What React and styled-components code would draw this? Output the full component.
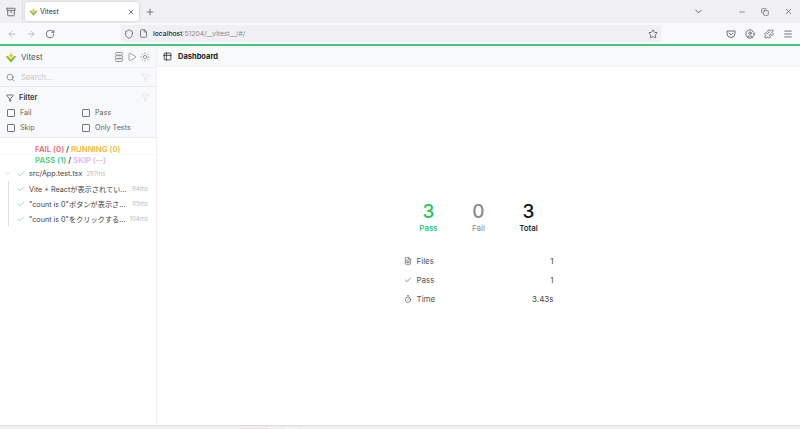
import React from "react";
import styled, { createGlobalStyle } from "styled-components";
import {
  ArrowLeft,
  ArrowRight,
  RotateCw,
  Shield,
  File,
  FileText,
  Star,
  ChevronDown,
  Minus,
  Copy,
  X,
  Plus,
  CircleUser,
  Puzzle,
  Menu,
  Search,
  Filter,
  FilterX,
  Play,
  Sun,
  Check,
  Timer,
  Table2,
  Archive
} from "lucide-react";

const GlobalStyle = createGlobalStyle`
  html, body { margin: 0; height: 100%; }
  body { font-family: Inter, "Noto Sans CJK JP", sans-serif; background: #fff; overflow: hidden; }
  #root { height: 100%; }
`;

const Page = styled.div`
  width: 800px;
  height: 429px;
  display: flex;
  flex-direction: column;
  overflow: hidden;
`;

const TabStrip = styled.div`
  height: 23px;
  background: #f0f0f4;
  display: flex;
  align-items: center;
  color: #5b5b66;
  flex: none;
`;

const TabGroupButton = styled.div`
  width: 23px;
  height: 23px;
  display: flex;
  align-items: center;
  justify-content: center;
  border-right: 1px solid #e0e0e6;
  box-sizing: border-box;
`;

const Tab = styled.div`
  width: 114px;
  height: 19px;
  margin-left: 2px;
  background: #fff;
  border-radius: 3px;
  box-shadow: 0 0 3px rgba(0, 0, 0, 0.2);
  display: flex;
  align-items: center;
  padding: 0 4px;
  box-sizing: border-box;
  font-size: 7px;
  color: #333;
  gap: 2px;
`;

const TabTitle = styled.span`
  flex: 1;
`;

const NewTab = styled.div`
  margin-left: 6px;
  display: flex;
`;

const StripRight = styled.div`
  margin-left: auto;
  display: flex;
  align-items: center;
  padding-right: 7px;
`;

const ListAll = styled.div`
  display: flex;
  margin-right: 34px;
`;

const WindowButtons = styled.div`
  display: flex;
  align-items: center;
  gap: 15px;
`;

const Toolbar = styled.div`
  height: 23px;
  box-sizing: border-box;
  background: #f9f9fb;
  border-bottom: 2px solid #46c67a;
  display: flex;
  align-items: center;
  color: #5b5b66;
  flex: none;
`;

const NavButtons = styled.div`
  display: flex;
  align-items: center;
  gap: 9px;
  margin-left: 7px;
  width: 114px;
`;

const UrlBar = styled.div`
  width: 540px;
  height: 17px;
  background: #f0f0f4;
  border-radius: 3px;
  display: flex;
  align-items: center;
  padding: 0 3px;
  box-sizing: border-box;
  gap: 5px;
`;

const UrlText = styled.div`
  flex: 1;
  font-size: 6.8px;
  color: #8a8a92;
  b {
    font-weight: 500;
    color: #2b2b33;
  }
`;

const ToolbarRight = styled.div`
  margin-left: auto;
  display: flex;
  align-items: center;
  gap: 9px;
  padding-right: 7px;
`;

const Content = styled.div`
  flex: 1;
  display: flex;
  min-height: 0;
`;

const Sidebar = styled.aside`
  width: 157px;
  flex: none;
  border-right: 1px solid #f1f1f1;
  box-sizing: border-box;
  display: flex;
  flex-direction: column;
`;

const SideHeader = styled.div`
  height: 21px;
  background: #f8f9fb;
  display: flex;
  align-items: center;
  padding: 0 6px 0 5px;
  font-size: 8px;
  color: #555;
  gap: 4px;
  flex: none;
`;

const HeaderActions = styled.div`
  margin-left: auto;
  display: flex;
  align-items: center;
  gap: 3px;
  color: #8b8b8b;
`;

const SearchRow = styled.div`
  height: 20px;
  background: #f8f9fb;
  border-top: 1px solid #f1f1f3;
  border-bottom: 1px solid #ebebee;
  box-sizing: border-box;
  display: flex;
  align-items: center;
  padding: 0 6px;
  gap: 6px;
  color: #777;
  flex: none;
`;

const SearchHint = styled.span`
  font-size: 7.5px;
  color: #c4c4c8;
  flex: 1;
`;

const FilterBox = styled.div`
  height: 51px;
  background: #f8f9fb;
  border-bottom: 1px solid #ebebee;
  box-sizing: border-box;
  padding: 5px 6px 0 6px;
  flex: none;
`;

const FilterTitle = styled.div`
  display: flex;
  align-items: center;
  gap: 5px;
  font-size: 7.5px;
  font-weight: 600;
  color: #333;
  height: 11px;
`;

const FaintIcon = styled.span`
  margin-left: auto;
  display: flex;
  color: #e0e0e3;
`;

const FilterGrid = styled.div`
  display: grid;
  grid-template-columns: 75px 1fr;
  grid-auto-rows: 15px;
  margin-top: 2px;
  padding-left: 1px;
`;

const CheckItem = styled.label`
  display: flex;
  align-items: center;
  gap: 5px;
  font-size: 7.2px;
  color: #666;
`;

const CheckBoxMark = styled.span`
  width: 8px;
  height: 8px;
  box-sizing: border-box;
  border: 1px solid #777;
  border-radius: 1px;
  flex: none;
`;

const Summary = styled.div`
  padding-top: 6px;
  font-size: 7.8px;
  font-weight: 600;
  color: #444;
  flex: none;
`;

const SummaryLine = styled.div`
  height: 11px;
  line-height: 11px;
  padding-left: 35px;
  &:first-child {
    border-bottom: 1px solid #f6f6f7;
    height: 10px;
  }
`;

const Colored = styled.span`
  color: ${props => props.color};
`;

const TreeRow = styled.div`
  height: 15px;
  display: flex;
  align-items: center;
  font-size: 7.2px;
  color: #444;
  padding-left: ${props => (props.$nested ? "8px" : "4px")};
  padding-right: 8px;
  margin-left: ${props => (props.$nested ? "8px" : "0")};
  border-left: ${props => (props.$nested ? "1px solid #dddddd" : "none")};
  white-space: nowrap;
`;

const RowCaret = styled.span`
  display: flex;
  color: #c4c4c4;
  width: 13px;
`;

const RowCheck = styled.span`
  display: flex;
  color: #4ccb84;
  margin-right: 4px;
`;

const Duration = styled.span`
  font-size: 6px;
  color: #bdbdbd;
  margin-left: ${props => (props.$right ? "auto" : "4px")};
`;

const Main = styled.main`
  flex: 1;
  display: flex;
  flex-direction: column;
  min-width: 0;
`;

const MainHeader = styled.div`
  height: 21px;
  background: #f8f9fb;
  border-bottom: 1px solid #f1f1f1;
  box-sizing: border-box;
  display: flex;
  align-items: center;
  padding-left: 6px;
  gap: 6px;
  font-size: 7.5px;
  font-weight: 700;
  color: #222;
  flex: none;
`;

const Dashboard = styled.div`
  flex: 1;
  display: flex;
  flex-direction: column;
  align-items: center;
  justify-content: center;
  padding-top: 14px;
`;

const Stats = styled.div`
  display: flex;
  justify-content: center;
`;

const Stat = styled.div`
  width: 50px;
  display: flex;
  flex-direction: column;
  align-items: center;
  color: ${props => props.color};
`;

const StatNumber = styled.div`
  font-size: 19px;
  font-weight: 500;
  line-height: 22px;
`;

const StatLabel = styled.div`
  font-size: 8px;
  font-weight: ${props => (props.$strong ? 500 : 400)};
  line-height: 11px;
`;

const Details = styled.div`
  width: 150px;
  margin-top: 21px;
  display: flex;
  flex-direction: column;
  gap: 6px;
`;

const DetailRow = styled.div`
  height: 13px;
  display: flex;
  align-items: center;
  font-size: 8px;
  color: #555;
  gap: 5px;
`;

const DetailValue = styled.span`
  margin-left: auto;
  color: #444;
`;

const BottomEdge = styled.div`
  height: 4px;
  flex: none;
  background: #efefef;
  border-top: 1px solid #dcdcdc;
  box-sizing: border-box;
  display: flex;
  align-items: flex-end;
  padding-left: 240px;
`;

const EdgeMark = styled.span`
  width: ${props => props.$width}px;
  height: 1px;
  margin-left: ${props => props.$offset}px;
  background: ${props => props.$color};
`;

const Logo = ({ size = 12 }) => (
  <svg width={size} height={size} viewBox="0 0 14 14">
    <path d="M0.5 6 L7 13.5 L13.5 6 L10.5 6 L7 10 L3.5 6 Z" fill="#7fb53c" />
    <path d="M8 0.5 L4.2 6.5 L6.6 6.5 L6 10.5 L9.8 4.8 L7.4 4.8 Z" fill="#f5bd1f" />
  </svg>
);

const PocketIcon = () => (
  <svg width="10" height="10" viewBox="0 0 10 10" fill="none" stroke="currentColor" strokeWidth="0.9">
    <path d="M1 2 H9 V4.5 A4 4 0 0 1 1 4.5 Z" strokeLinejoin="round" />
    <path d="M3 4 L5 5.8 L7 4" strokeLinecap="round" strokeLinejoin="round" />
  </svg>
);

const StackIcon = () => (
  <svg width="10" height="10" viewBox="0 0 10 10" fill="none" stroke="currentColor" strokeWidth="0.9">
    <rect x="1.5" y="0.5" width="7" height="2.6" rx="1" />
    <rect x="1.5" y="3.7" width="7" height="2.6" rx="1" />
    <rect x="1.5" y="6.9" width="7" height="2.6" rx="1" />
  </svg>
);

const tests = [
  { name: "Vite + Reactが表示されてい...", ms: "94ms" },
  { name: "\"count is 0\"ボタンが表示さ...", ms: "85ms" },
  { name: "\"count is 0\"をクリックする...", ms: "104ms" }
];

const App = () => (
  <Page>
    <GlobalStyle />
    <TabStrip>
      <TabGroupButton>
        <Archive size={10} />
      </TabGroupButton>
      <Tab>
        <Logo size={9} />
        <TabTitle>Vitest</TabTitle>
        <X size={8} />
      </Tab>
      <NewTab>
        <Plus size={10} />
      </NewTab>
      <StripRight>
        <ListAll>
          <ChevronDown size={11} />
        </ListAll>
        <WindowButtons>
          <Minus size={8} />
          <Copy size={8} />
          <X size={9} />
        </WindowButtons>
      </StripRight>
    </TabStrip>
    <Toolbar>
      <NavButtons>
        <ArrowLeft size={10} color="#b5b5bb" />
        <ArrowRight size={10} color="#b5b5bb" />
        <RotateCw size={10} />
      </NavButtons>
      <UrlBar>
        <Shield size={10} />
        <File size={9} />
        <UrlText>
          <b>localhost</b>:51204/__vitest__/#/
        </UrlText>
        <Star size={10} />
      </UrlBar>
      <ToolbarRight>
        <PocketIcon />
        <CircleUser size={10} />
        <Puzzle size={10} />
        <Menu size={10} />
      </ToolbarRight>
    </Toolbar>
    <Content>
      <Sidebar>
        <SideHeader>
          <Logo />
          Vitest
          <HeaderActions>
            <StackIcon />
            <Play size={10} />
            <Sun size={10} />
          </HeaderActions>
        </SideHeader>
        <SearchRow>
          <Search size={9} />
          <SearchHint>Search...</SearchHint>
          <FaintIcon>
            <FilterX size={9} />
          </FaintIcon>
        </SearchRow>
        <FilterBox>
          <FilterTitle>
            <Filter size={8} />
            Filter
            <FaintIcon>
              <FilterX size={9} />
            </FaintIcon>
          </FilterTitle>
          <FilterGrid>
            {["Fail", "Pass", "Skip", "Only Tests"].map(label => (
              <CheckItem key={label}>
                <CheckBoxMark />
                {label}
              </CheckItem>
            ))}
          </FilterGrid>
        </FilterBox>
        <Summary>
          <SummaryLine>
            <Colored color="#f0666e">FAIL (0)</Colored> / <Colored color="#f6b73c">RUNNING (0)</Colored>
          </SummaryLine>
          <SummaryLine>
            <Colored color="#4ccb84">PASS (1)</Colored> / <Colored color="#d8b4fe">SKIP (--)</Colored>
          </SummaryLine>
        </Summary>
        <div>
          <TreeRow>
            <RowCaret>
              <ChevronDown size={7} />
            </RowCaret>
            <RowCheck>
              <Check size={8} />
            </RowCheck>
            src/App.test.tsx
            <Duration>287ms</Duration>
          </TreeRow>
          {tests.map(test => (
            <TreeRow $nested key={test.ms}>
              <RowCheck>
                <Check size={8} />
              </RowCheck>
              {test.name}
              <Duration $right>{test.ms}</Duration>
            </TreeRow>
          ))}
        </div>
      </Sidebar>
      <Main>
        <MainHeader>
          <Table2 size={9} />
          Dashboard
        </MainHeader>
        <Dashboard>
          <Stats>
            <Stat color="#22c55e">
              <StatNumber>3</StatNumber>
              <StatLabel $strong>Pass</StatLabel>
            </Stat>
            <Stat color="#8a8a8a">
              <StatNumber>0</StatNumber>
              <StatLabel>Fail</StatLabel>
            </Stat>
            <Stat color="#111">
              <StatNumber>3</StatNumber>
              <StatLabel $strong>Total</StatLabel>
            </Stat>
          </Stats>
          <Details>
            <DetailRow>
              <FileText size={8} />
              Files
              <DetailValue>1</DetailValue>
            </DetailRow>
            <DetailRow>
              <Check size={8} />
              Pass
              <DetailValue>1</DetailValue>
            </DetailRow>
            <DetailRow>
              <Timer size={8} />
              Time
              <DetailValue>3.43s</DetailValue>
            </DetailRow>
          </Details>
        </Dashboard>
      </Main>
    </Content>
    <BottomEdge>
      <EdgeMark $width={28} $offset={0} $color="#fbdcdc" />
      <EdgeMark $width={12} $offset={17} $color="#f7f7f7" />
    </BottomEdge>
  </Page>
);

export default App;
